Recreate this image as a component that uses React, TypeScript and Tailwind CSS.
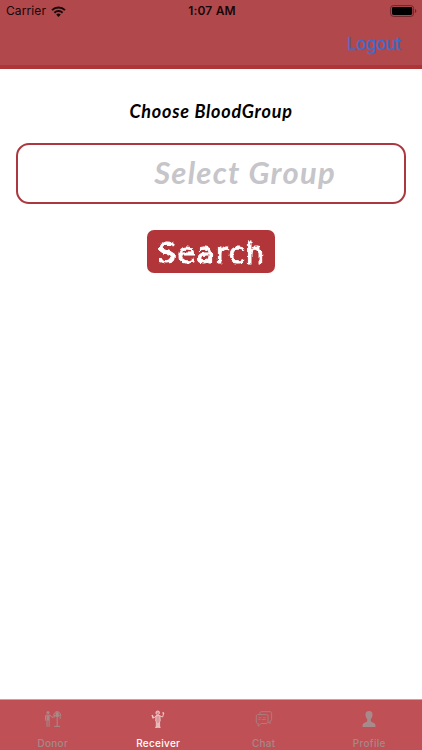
import React, { useState } from 'react';

type TabName = 'Donor' | 'Receiver' | 'Chat' | 'Profile';

function WifiIcon() {
  return (
    <svg className="w-[15px] h-[11px]" viewBox="0 0 15 11" fill="none" stroke="#160709" strokeWidth="2">
      <path d="M1 4.1a9.3 9.3 0 0 1 13 0" />
      <path d="M3.4 6.7a5.9 5.9 0 0 1 8.2 0" />
      <path d="M5.2 8.6a3.3 3.3 0 0 1 4.6 0L7.5 10.9z" fill="#160709" stroke="none" />
    </svg>
  );
}

function BatteryIcon() {
  return (
    <svg className="w-[27px] h-[12px]" viewBox="0 0 27 12">
      <rect x="0.6" y="0.6" width="23" height="10.8" rx="2.8" fill="none" stroke="#6a272b" strokeWidth="1" />
      <rect x="2" y="2" width="20.2" height="8" rx="1.4" fill="#000" />
      <path d="M25 4v4c1.8-.6 1.8-3.4 0-4z" fill="#6a272b" />
    </svg>
  );
}

function DonorIcon() {
  return (
    <svg className="w-[18px] h-[18px]" viewBox="0 0 18 18" fill="none" stroke="currentColor" strokeWidth="1">
      <circle cx="4" cy="2.4" r="1.5" fill="currentColor" stroke="none" />
      <path d="M2 5.1h4.1l1.8 2.3 2.5-.8M1.5 5.3v5.3M3 5v11.8M5.1 5v11.8" />
      <path d="M3 6h2.1v4.5H3z" fill="currentColor" stroke="none" />
      <path d="M13.2 2v14M10.2 16.4h6M9.7 5.6c.2-2.3 1.6-4 3.5-4s3.3 1.7 3.5 4z" />
      <path d="M11.6 2.4h3.2v4.4h-3.2z" fill="currentColor" stroke="none" />
      <path d="M10.3 6.3v1.2M16.2 6.3v2.5" />
    </svg>
  );
}

function ReceiverIcon() {
  return (
    <svg className="w-[18px] h-[18px]" viewBox="0 0 18 18" fill="none" stroke="currentColor" strokeWidth="0.9">
      <circle cx="8.7" cy="2.8" r="1.8" fill="currentColor" fillOpacity="0.35" />
      <path d="M7 2h3.5" />
      <path d="M7 5.6h3.9l.3 5.2-.6 1v5.4H9.3V13h-.5v4.2H7.3v-5.4l-.6-1z" fill="currentColor" fillOpacity="0.6" />
      <path d="M7.2 5.8 4.8 8 3.2 5.8M10.8 5.9l2.9 1.1.7-3" />
      <path d="M3.2 5 4.2 8.4M13.9 2.3l.8 1.9" strokeWidth="1.5" />
      <path d="M6 17.3h2.5M9.3 17.3h2.4" />
    </svg>
  );
}

function ChatIcon() {
  return (
    <svg className="w-[18px] h-[18px]" viewBox="0 0 18 18" fill="none" stroke="currentColor" strokeWidth="0.75">
      <path d="M4.9 4.4V3.2c0-1 .6-1.5 1.5-1.5h8.5c1 0 1.7.6 1.7 1.5v6.2c0 1-.6 1.6-1.6 1.6v2.6l-1.9-1.9" />
      <path d="M2.8 4.6h8.6c1 0 1.6.5 1.6 1.5v5.8c0 1-.6 1.6-1.6 1.6H6.2l-3 2.7v-2.7H2.8c-.9 0-1.5-.6-1.5-1.6V6.1c0-1 .6-1.5 1.5-1.5z" />
      <path d="M3.4 7.7h3.1M8 7.7h2.8M3.4 9.5h2M6.7 9.5h4.1" strokeWidth="0.6" />
    </svg>
  );
}

function ProfileIcon() {
  return (
    <svg className="w-[18px] h-[18px]" viewBox="0 0 18 18" fill="currentColor">
      <path d="M9 1c2.4 0 3.7 1.5 3.5 4-.1 1.7-.7 3.2-1.7 4.1v2.1c.6 1.2 4.1 1.5 4.6 3.6l.1 2.2h-13l.1-2.2c.5-2.1 4-2.4 4.6-3.6V9.1C6.2 8.2 5.6 6.7 5.5 5 5.3 2.5 6.6 1 9 1z" />
    </svg>
  );
}

const tabs: { name: TabName; icon: React.ReactNode }[] = [
  { name: 'Donor', icon: <DonorIcon /> },
  { name: 'Receiver', icon: <ReceiverIcon /> },
  { name: 'Chat', icon: <ChatIcon /> },
  { name: 'Profile', icon: <ProfileIcon /> },
];

export default function App() {
  const [activeTab, setActiveTab] = useState<TabName>('Receiver');
  const [group, setGroup] = useState('');

  return (
    <div className="w-full h-screen flex flex-col bg-white overflow-hidden font-['Inter','Liberation_Sans',sans-serif]">
      {/* Status bar + navigation */}
      <header className="h-[69px] shrink-0 bg-[#b1484c] border-b-[4px] border-[#ad3439]">
        <div className="h-[22px] grid grid-cols-3 items-center pl-[6px] pr-[5px] text-[#160709]">
          <div className="flex items-center gap-[5px] text-[12px] tracking-[0.1px]">
            Carrier <WifiIcon />
          </div>
          <div className="text-center text-[12px] font-semibold tracking-[0.2px] pl-px">1:07 AM</div>
          <div className="flex justify-end">
            <BatteryIcon />
          </div>
        </div>
        <div className="h-[43px] flex items-center justify-end pr-[21px] pt-[2px]">
          <button className="text-[17px] text-[#426bc8] tracking-[-0.35px] [-webkit-text-stroke:0.3px_#426bc8]">Logout</button>
        </div>
      </header>

      {/* Search form */}
      <main className="flex-1 flex flex-col items-center px-[16px] pt-[30px]">
        <h1 className="h-[24px] leading-[24px] text-[18px] font-bold italic tracking-[0.75px] text-black font-['Lato',sans-serif]">
          Choose BloodGroup
        </h1>
        <input
          value={group}
          onChange={(e) => setGroup(e.target.value)}
          placeholder="Select Group"
          className="mt-[20px] w-full h-[61px] pl-[68px] pb-[3px] pr-0 border-2 border-[#aa383e] rounded-[13px] text-center text-[31px] font-bold italic tracking-[1.25px] text-black placeholder:text-[#c5c5ca] font-['Lato',sans-serif] outline-none"
        />
        <button className="mt-[26px] w-[128px] h-[43px] rounded-[7px] bg-[#b2353a] text-white text-[29px] leading-[43px] tracking-[1.4px] font-['DejaVu_Sans',sans-serif]">
          <span className="block pt-[2px] pl-px [filter:url(#chalk)] [-webkit-text-stroke:0.9px_white]">Search</span>
        </button>
        <svg className="w-0 h-0">
          <filter id="chalk" x="-5%" y="-5%" width="110%" height="110%">
            <feTurbulence type="fractalNoise" baseFrequency="0.22" numOctaves="2" seed="4" result="noise" />
            <feDisplacementMap in="SourceGraphic" in2="noise" scale="4" xChannelSelector="R" yChannelSelector="G" />
            <feGaussianBlur stdDeviation="0.3" />
          </filter>
        </svg>
      </main>

      {/* Tab bar */}
      <nav className="h-[51px] shrink-0 grid grid-cols-4 bg-[#bf5156] border-t border-[#c9a0a4]">
        {tabs.map((tab) => (
          <button
            key={tab.name}
            onClick={() => setActiveTab(tab.name)}
            className={`flex flex-col items-center justify-start pt-[10px] text-[10px] leading-[12px] tracking-[0.3px] font-medium ${
              activeTab === tab.name ? 'text-white' : 'text-[#a38889]'
            }`}
          >
            <span className={activeTab === tab.name ? 'text-[#efc8ca]' : 'text-[#a78b8c]'}>{tab.icon}</span>
            <span className="mt-[9px]">{tab.name}</span>
          </button>
        ))}
      </nav>
    </div>
  );
}
